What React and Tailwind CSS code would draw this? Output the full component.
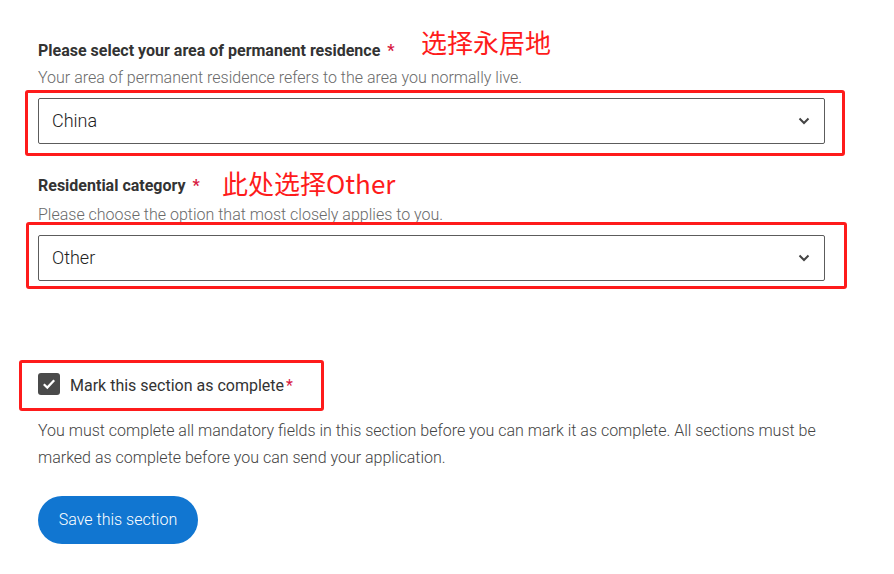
import React from "react";

function Chevron() {
  return (
    <svg width="12" height="8" viewBox="0 0 12 8" className="shrink-0">
      <path d="M1.5 1.5 L6 6 L10.5 1.5" fill="none" stroke="#444" strokeWidth="2" />
    </svg>
  );
}

function Select({ value }) {
  return (
    <div className="flex h-[46px] w-[787px] items-center justify-between rounded-[2px] border border-[#5c5c5c] bg-white pl-[13px] pr-[14px]">
      <span className="text-[18px] font-light leading-[24px] text-[#222]">{value}</span>
      <Chevron />
    </div>
  );
}

function Star() {
  return <span className="text-[#d81b43]">*</span>;
}

export default function App() {
  return (
    <div
      className="relative h-[574px] w-[894px] overflow-hidden bg-white"
      style={{ fontFamily: "Roboto, 'Noto Sans CJK SC', sans-serif" }}
    >
      <div className="flex flex-col pl-[38px] pt-[40px]">
        {/* Section 1 */}
        <div className="text-[16px] font-bold leading-[21px] text-[#333]">
          Please select your area of permanent residence <span className="ml-[3px]"><Star /></span>
        </div>
        <div className="mt-[5px] text-[16px] font-light leading-[24px] text-[#6a6a6a]">
          Your area of permanent residence refers to the area you normally live.
        </div>
        <div className="mt-[8px]">
          <Select value="China" />
        </div>

        {/* Section 2 */}
        <div className="mt-[31px] text-[16px] font-bold leading-[21px] text-[#333]">
          Residential category <span className="ml-[3px]"><Star /></span>
        </div>
        <div className="mt-[7px] text-[16px] font-light leading-[24px] text-[#6a6a6a]">
          Please choose the option that most closely applies to you.
        </div>
        <div className="mt-[8px]">
          <Select value="Other" />
        </div>

        {/* Checkbox */}
        <div className="mt-[92px] flex items-start gap-[10px]">
          <div className="flex h-[22px] w-[22px] items-center justify-center rounded-[3px] bg-[#4a4a4a]">
            <svg width="14" height="12" viewBox="0 0 14 12">
              <path d="M1.8 6.2 L5.3 9.6 L12.2 2.2" fill="none" stroke="#fff" strokeWidth="2.2" />
            </svg>
          </div>
          <div className="mt-[1px] text-[16px] leading-[24px] text-[#333]">
            Mark this section as complete<span className="ml-[2px]"><Star /></span>
          </div>
        </div>
        <p className="mt-[19px] w-[800px] text-[16px] font-light leading-[27px] text-[#444]">
          You must complete all mandatory fields in this section before you can mark it as complete. All sections must be marked as complete before you can send your application.
        </p>
        <div className="mt-[25px]">
          <button className="h-[48px] w-[160px] rounded-full bg-[#1176d1] text-[16px] font-light text-white">
            Save this section
          </button>
        </div>
      </div>

      {/* Annotations */}
      <div className="pointer-events-none absolute left-[25px] top-[90px] h-[66px] w-[820px] rounded-[3px] border-[3px] border-[#fe1b1b]" />
      <div className="pointer-events-none absolute left-[26px] top-[222px] h-[67px] w-[821px] rounded-[3px] border-[3px] border-[#fe1b1b]" />
      <div className="pointer-events-none absolute left-[19px] top-[360px] h-[51px] w-[305px] rounded-[3px] border-[3px] border-[#fe1b1b]" />
      <div
        className="absolute left-[421px] top-[27px] text-[26px] leading-[30px] text-[#fe1b1b]"
        style={{ fontFamily: "'Noto Sans CJK SC', sans-serif" }}
      >
        选择永居地
      </div>
      <div
        className="absolute left-[222px] top-[168px] text-[26px] leading-[30px] text-[#fe1b1b]"
        style={{ fontFamily: "'Noto Sans CJK SC', sans-serif" }}
      >
        此处选择Other
      </div>
    </div>
  );
}
